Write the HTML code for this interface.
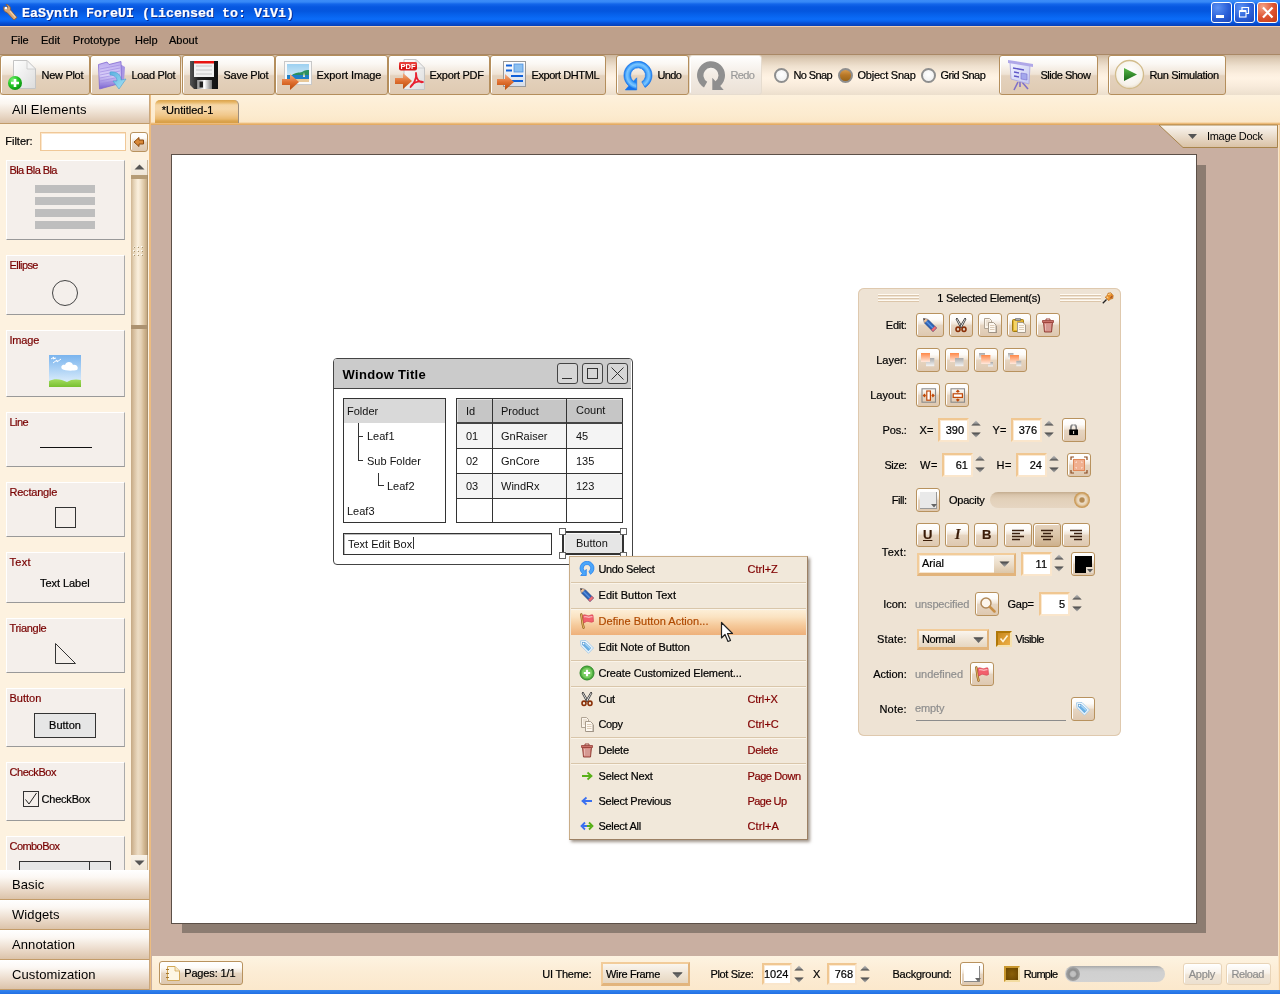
<!DOCTYPE html>
<html lang="en">
<head>
<meta charset="utf-8">
<title>EaSynth ForeUI</title>
<style>
*{box-sizing:border-box;margin:0;padding:0}
html,body{width:1280px;height:994px;overflow:hidden;background:#c9afa1}
body{position:relative;will-change:transform;-webkit-text-stroke:.2px;font:11px "Liberation Sans",sans-serif;color:#000}
.abs{position:absolute}
#titlebar{left:0;top:0;width:1280px;height:26px;background:linear-gradient(#3c8cf8 0,#3688f6 2px,#1466ea 4px,#0657e0 7px,#0456de 11px,#0762ec 15px,#0b6cf8 19px,#0a64f0 21px,#0750d6 23px,#0644c2 25px,#0540b8 26px)}
#titletext{left:22px;top:6px;font:bold 13.33px "Liberation Mono",monospace;color:#fff;white-space:pre;text-shadow:1px 1px 0 #0a2a90}
.wbtn{top:2px;width:21px;height:21px;border:1px solid #fff;border-radius:3px;background:radial-gradient(circle at 30% 25%,#5c92f4,#2a5fd8 55%,#1c46b8)}
#menubar{left:0;top:27px;width:1280px;height:28px;background:#bea08b;border-bottom:1px solid #a98866}
#menubar span{position:absolute;top:7px;font-size:11px}
#toolbar{left:0;top:55px;width:1280px;height:40px;background:linear-gradient(#cdb79e 0,#dccab4 10%,#efe1cf 28%,#fcefdf 48%,#fff3e4 58%,#f8ebdb 78%,#ecdfcd 100%)}
.tb{top:55px;height:40px;border:1px solid #b48e5c;border-radius:3px;box-shadow:inset 1px 1px 0 #fff;background:linear-gradient(#ffffff 0,#fbf8f4 20%,#efe3d5 48%,#e4d2bd 52%,#dfcab2 100%)}
.tb b{position:absolute;top:13px;font-weight:normal;white-space:nowrap}
.tb.dis{border-color:#e6dccf;background:linear-gradient(#fff,#f3ece4 50%,#ebe1d6)}
.tb.dis b{color:#9a9a9a}
.rad{width:15px;height:15px;border-radius:50%;border:2px solid #8e8e8e;background:radial-gradient(circle at 50% 40%,#fff,#ececec)}
.rad.on{background:linear-gradient(#d89a4c,#b87828 45%,#9a6418)}
.rtx{white-space:nowrap}
#tab{left:155px;top:100px;width:84px;height:23px;border-radius:5px 5px 0 0;border-right:1px solid #9c8e80;background:linear-gradient(#d9a24c 0,#e6b462 2px,#f5d6a6 5px,#f6d8aa 9px,#f1c88c 15px,#eab86c 19px,#dba44e 21px,#d79e46 23px)}
#tab span{position:absolute;left:6.8px;top:4px;white-space:nowrap}
.sbtn{border:1px solid #b8925e;border-radius:3px;box-shadow:inset 1px 1px 0 #fff;background:linear-gradient(#fff 0,#fdfbf8 25%,#f1e6d9 45%,#e6d5c1 52%,#dec8b0 100%)}
#sbar{left:131px;top:175px;width:17px;height:680px;border-right:1px solid #a8906c;background:linear-gradient(90deg,#c4a884 0,#d8c0a0 3px,#ecdcc4 7px,#e6d2b6 10px,#d2b892 13px,#bea07a 16px)}
#sthumb{left:131px;top:175px;width:16px;height:154px;background:linear-gradient(90deg,#cfb592 0,#e6d4b8 3px,#fbf0de 7px,#f4e6d0 9px,#dcc6a4 13px,#c4a882 16px);border-top:4px solid #b59c76;border-bottom:4px solid #ac9270}
.sbtn.dis{border-color:#e8d4b8;background:linear-gradient(#fff,#f8f2ea 45%,#f0e6d8 55%,#ece0d0);color:#8e8e8e}
.combo{border:2px solid #f2cc9a;border-right-color:#e2b47c;border-bottom:3px solid #e2b47c;background:linear-gradient(#faf5ee,#f0e5d6 50%,#e6d6c0)}
.inp{background:#fff;border:2px solid #f0c792;border-right-color:#fae6cc;border-bottom-color:#fae6cc;box-shadow:inset 1px 1px 0 #fbe9d2;text-align:right;padding:3px 2px 0 0;white-space:nowrap}
#wfwin{-webkit-text-stroke:0;left:333px;top:358px;width:300px;height:207px;border:1.5px solid #444;border-radius:4px;background:#fff}
.wfb{top:4px;width:21px;height:21px;border:1px solid #444;border-radius:3px;background:#d6d6d6}
.wt{-webkit-text-stroke:0;font-size:11px;white-space:nowrap;color:#111}
.hnd{width:7px;height:7px;background:#fff;border:1px solid #666}
#cmenu{left:569px;top:556px;width:239px;height:284px;background:#f1e8da;border:1px solid #c9ad88;border-right-color:#9c8064;border-bottom-color:#9c8064;box-shadow:2px 2px 3px rgba(80,60,40,.55)}
.sep{left:1px;width:235px;height:2px;background:linear-gradient(#d9c6aa 50%,#faf4ea 50%)}
.mi{white-space:nowrap}
.mi.hl{color:#b04a00}
.mk{white-space:nowrap;color:#800000}
#props{left:858px;top:288px;width:263px;height:448px;background:#eee3d4;box-shadow:inset 0 0 0 1px #dfc9ae;border-radius:6px}
.pl{white-space:nowrap}
.gray{color:#8e8e8e}
.grip{width:41px;height:1px;background:#fffaf2;box-shadow:0 1px 0 #dcc6aa,0 3px 0 #fffaf2,0 4px 0 #dcc6aa,0 6px 0 #fffaf2,0 7px 0 #dcc6aa}
.tbi{font-size:13px;color:#3a1c08}
.sbtn.pressed{background:linear-gradient(#e6d4be,#dcc6aa 50%,#cdb08c)}
#tabrow{left:150px;top:95px;width:1130px;height:30px;background:linear-gradient(#fdf1dd 0,#fdeed5 10px,#fcebcf 20px,#fbe7c8 27px,#f2c88e 28px,#e6ae66 29px,#e2a860 30px)}
#leftpanel{left:0;top:95px;width:151px;height:895px;background:#fdf2e0;border-right:2px solid #ecbc80}
#lphead{-webkit-text-stroke:0;left:0;top:95px;width:150px;height:29px;background:linear-gradient(#fff 0,#fbf6f0 30%,#efe2d4 60%,#dcc4ac 100%);border-bottom:1px solid #c29b69;border-right:1px solid #caa77c}
.acc{-webkit-text-stroke:0;left:0;width:150px;height:30px;background:linear-gradient(#fff 0,#fcf8f4 25%,#f0e3d6 55%,#dcc3aa 100%);border-bottom:1px solid #c39c6a;border-right:1px solid #caa77c;font-size:13px;letter-spacing:.1px;padding:7px 0 0 12px}
.card{left:6px;width:119px;background:#f4efeb;border-top:1px solid #fff;border-left:1px solid #fff;border-right:1px solid #aaa;border-bottom:1px solid #999}
.card i{position:absolute;left:2.5px;top:3px;font-style:normal;color:#780000;font-size:11px;white-space:nowrap}
#canvas{left:171px;top:154px;width:1026px;height:770px;background:#fff;border:1px solid #5c5048}
#statusbar{left:152px;top:956px;width:1128px;height:34px;background:linear-gradient(#fdf3e1,#fcecd4 50%,#fbe8cc)}
#bottomblue{left:0;top:990px;width:1280px;height:4px;background:linear-gradient(#3484ee,#2270e4)}
</style>
</head>
<body>
<svg width="0" height="0" style="position:absolute"><defs><linearGradient id="spu" x1="0" y1="0" x2="0" y2="1"><stop offset="0" stop-color="#c4c4c4"/><stop offset=".6" stop-color="#8a8a8a"/><stop offset="1" stop-color="#3c3c3c"/></linearGradient><linearGradient id="spd" x1="0" y1="0" x2="0" y2="1"><stop offset="0" stop-color="#3c3c3c"/><stop offset=".5" stop-color="#7a7a7a"/><stop offset="1" stop-color="#b0b0b0"/></linearGradient></defs></svg>
<!-- canvas area -->
<div class="abs" style="left:152px;top:125px;width:1126px;height:831px;background:#c9afa1"></div>
<div class="abs" style="left:182px;top:165px;width:1024px;height:768px;background:#8c7c71"></div>
<div class="abs" id="canvas"></div>

<!-- wireframe window -->
<div class="abs" id="wfwin">
<div class="abs" style="left:0;top:0;width:297px;height:30px;background:#cbcbcb;border-bottom:1px solid #444;border-radius:2px 2px 0 0"></div>
<span class="abs" style="left:8.5px;top:7.5px;font:bold 13px 'Liberation Sans',sans-serif;white-space:nowrap;letter-spacing:0.31px">Window Title</span>
<div class="abs wfb" style="left:223px"><div class="abs" style="left:4px;top:14px;width:10px;height:1px;background:#333"></div></div>
<div class="abs wfb" style="left:248px"><div class="abs" style="left:4px;top:4px;width:11px;height:11px;border:1px solid #333"></div></div>
<div class="abs wfb" style="left:273px"><svg class="abs" style="left:3px;top:3px" width="13" height="13" viewBox="0 0 13 13"><path d="M0.5 0.5L12.5 12.5M12.5 0.5L0.5 12.5" stroke="#333" stroke-width="1"/></svg></div>
<!-- tree -->
<div class="abs" style="left:9px;top:39px;width:103px;height:125px;border:1px solid #333;background:#fff"></div>
<div class="abs" style="left:10px;top:40px;width:101px;height:24px;background:#d9d9d9"></div>
<span class="abs wt" style="left:13px;top:46px">Folder</span>
<span class="abs wt" style="left:33px;top:71px">Leaf1</span>
<span class="abs wt" style="left:33px;top:96px">Sub Folder</span>
<span class="abs wt" style="left:53px;top:121px">Leaf2</span>
<span class="abs wt" style="left:13px;top:146px">Leaf3</span>
<div class="abs" style="left:24px;top:64px;width:1px;height:38px;background:#333"></div>
<div class="abs" style="left:24px;top:77px;width:5px;height:1px;background:#333"></div>
<div class="abs" style="left:24px;top:101px;width:5px;height:1px;background:#333"></div>
<div class="abs" style="left:44px;top:114px;width:1px;height:13px;background:#333"></div>
<div class="abs" style="left:44px;top:126px;width:6px;height:1px;background:#333"></div>
<!-- table -->
<div class="abs" style="left:122px;top:39px;width:167px;height:125px;border:1px solid #333;background:#fff"></div>
<div class="abs" style="left:123px;top:40px;width:165px;height:24px;background:#c6c6c6;box-shadow:inset 1px 1px 0 #e4e4e4"></div>
<div class="abs" style="left:123px;top:65px;width:165px;height:24px;background:#f4f4f4"></div>
<div class="abs" style="left:123px;top:115px;width:165px;height:24px;background:#f4f4f4"></div>
<div class="abs" style="left:122px;top:63px;width:167px;height:2px;background:#444"></div>
<div class="abs" style="left:122px;top:89px;width:167px;height:1px;background:#333"></div>
<div class="abs" style="left:122px;top:114px;width:167px;height:1px;background:#333"></div>
<div class="abs" style="left:122px;top:139px;width:167px;height:1px;background:#333"></div>
<div class="abs" style="left:158px;top:39px;width:1px;height:125px;background:#333"></div>
<div class="abs" style="left:232px;top:39px;width:1px;height:125px;background:#333"></div>
<span class="abs wt" style="left:132px;top:46px">Id</span><span class="abs wt" style="left:167px;top:46px">Product</span><span class="abs wt" style="left:242px;top:45px">Count</span>
<span class="abs wt" style="left:132px;top:71px">01</span><span class="abs wt" style="left:167px;top:71px">GnRaiser</span><span class="abs wt" style="left:242px;top:71px">45</span>
<span class="abs wt" style="left:132px;top:96px">02</span><span class="abs wt" style="left:167px;top:96px">GnCore</span><span class="abs wt" style="left:242px;top:96px">135</span>
<span class="abs wt" style="left:132px;top:121px">03</span><span class="abs wt" style="left:167px;top:121px">WindRx</span><span class="abs wt" style="left:242px;top:121px">123</span>
<!-- text edit + button -->
<div class="abs" style="left:9px;top:174px;width:209px;height:22px;border:1.5px solid #333;background:#fff;box-shadow:inset 1px 1px 0 #bbb"></div>
<span class="abs wt" style="left:14px;top:179px">Text Edit Box</span><div class="abs" style="left:79px;top:178px;width:1px;height:12px;background:#333"></div>
<div class="abs" style="left:228px;top:172px;width:62px;height:24px;border:2px solid #333;background:#e6e6e6;box-shadow:inset 1px 1px 0 #fafafa"></div>
<span class="abs wt" style="left:242px;top:178px">Button</span>
<div class="abs hnd" style="left:225px;top:169px"></div><div class="abs hnd" style="left:286px;top:169px"></div><div class="abs hnd" style="left:225px;top:193px"></div><div class="abs hnd" style="left:286px;top:193px"></div>
</div>

<!-- properties panel -->
<div class="abs" id="props">
<div class="abs grip" style="left:20px;top:6px"></div><div class="abs grip" style="left:202px;top:6px"></div>
<span class="abs" style="left:79.3px;top:4px;white-space:nowrap;letter-spacing:-0.24px">1 Selected Element(s)</span>
<svg class="abs" style="left:244px;top:4px" width="12" height="12" viewBox="0 0 12 12"><path d="M0.8 11.2L4.5 7.5" stroke="#222" stroke-width="1.3"/><path d="M3.2 5.2L6.8 8.8L8.2 7.2L10.8 6.5L11.2 3.5L8.8 0.8L6 1.2L5 3.8Z" fill="#e8902c" stroke="#b06010" stroke-width=".6"/><path d="M6.2 2.5L8.5 1.8M5 4.8L6 5.8" stroke="#fcd490" stroke-width="1.1" stroke-linecap="round"/><path d="M8.5 6.2L10.2 4" stroke="#a04c28" stroke-width="1.2"/></svg>
<span class="abs pl" style="right:214.3px;top:31px;letter-spacing:-0.23px">Edit:</span>
<div class="abs sbtn" style="left:58px;top:25px;width:28px;height:24px"><svg class="abs" style="left:5px;top:3px" width="16" height="16" viewBox="0 0 16 16"><path d="M1.5 1.5L6 2.5L14.5 11L11 14.5L2.5 6Z" fill="#2e64b8" stroke="#1a3c7c" stroke-width=".7" stroke-linejoin="round"/><path d="M4.2 4.2L12.7 12.7" stroke="#5a94e0" stroke-width="1.3"/><path d="M1.5 1.5L6 2.5L2.5 6Z" fill="#f4c8a0" stroke="#c89868" stroke-width=".4"/><path d="M1.5 1.5L3.3 1.9L1.9 3.3Z" fill="#222"/><path d="M12.8 9.3L14.5 11L11 14.5L9.3 12.8Z" fill="#f07078" stroke="#c04850" stroke-width=".5"/></svg></div>
<div class="abs sbtn" style="left:91px;top:25px;width:24px;height:24px"><svg class="abs" style="left:3px;top:3px" width="16" height="16" viewBox="0 0 16 16"><path d="M4 1L9 9.5L7.5 10.5L3 2Z" fill="#f4f4f4" stroke="#222" stroke-width=".8"/><path d="M12 1L7 9.5L8.5 10.5L13 2Z" fill="#f4f4f4" stroke="#222" stroke-width=".8"/><ellipse cx="5" cy="12.3" rx="2" ry="2.2" fill="none" stroke="#8a3008" stroke-width="1.6"/><ellipse cx="11" cy="12.3" rx="2" ry="2.2" fill="none" stroke="#8a3008" stroke-width="1.6"/></svg></div>
<div class="abs sbtn" style="left:120px;top:25px;width:24px;height:24px"><svg class="abs" style="left:3px;top:3px" width="16" height="16" viewBox="0 0 16 16"><path d="M2.5 1.5H7.5L9.5 3.5V11.5H2.5Z" fill="#fbf4ea" stroke="#b0a494" stroke-width="1"/><path d="M4 4H8M4 6H8M4 8H8" stroke="#d8c8b4" stroke-width=".8"/><path d="M6.5 5.5H11.5L14 8V15.5H6.5Z" fill="#fdf8f0" stroke="#a89c8c" stroke-width="1"/><path d="M8 8.5H12.5M8 10.5H12.5M8 12.5H12.5" stroke="#d4c0a8" stroke-width=".8"/><path d="M7.5 16H14.5V9" stroke="#8a8074" stroke-width="1" fill="none" opacity=".6"/></svg></div>
<div class="abs sbtn" style="left:149px;top:25px;width:24px;height:24px"><svg class="abs" style="left:3px;top:3px" width="16" height="16" viewBox="0 0 16 16"><rect x="1.5" y="2.5" width="11" height="12" rx="1" fill="#e0b030" stroke="#a07c10" stroke-width="1"/><rect x="3" y="4" width="3" height="9" fill="#f4d468"/><path d="M4.5 1.5H9.5V3.5H4.5Z" fill="#aaa" stroke="#666" stroke-width=".6"/><path d="M6.5 5.5H12L14.5 8V15.5H6.5Z" fill="#fdf8f0" stroke="#a89c8c" stroke-width="1"/><path d="M8 8.5H13M8 10.5H13M8 12.5H13" stroke="#d4c0a8" stroke-width=".8"/></svg></div>
<div class="abs sbtn" style="left:178px;top:25px;width:24px;height:24px"><svg class="abs" style="left:3px;top:3px" width="16" height="16" viewBox="0 0 16 16"><path d="M3.5 5.5H12.5L11.5 15H4.5Z" fill="#d88c84" stroke="#8a3830" stroke-width=".9"/><path d="M2.5 3.5H13.5V5.5H2.5Z" fill="#c87068" stroke="#984038" stroke-width=".8"/><path d="M6 3.5V2H10V3.5" fill="none" stroke="#984038" stroke-width="1"/><path d="M6 7V13.5M8 7V13.5M10 7V13.5" stroke="#fbe4e0" stroke-width="1"/><path d="M7 7V13.5M9 7V13.5M11 7V13.5" stroke="#a85048" stroke-width=".6"/></svg></div>
<span class="abs pl" style="right:214.3px;top:66px;letter-spacing:-0.02px">Layer:</span>
<div class="abs sbtn" style="left:58px;top:60px;width:24px;height:24px"><svg class="abs" style="left:0px;top:0px" width="22" height="22" viewBox="0 0 22 22"><defs><linearGradient id="lo" x1="0" y1="0" x2="0" y2="1"><stop offset="0" stop-color="#ff8848"/><stop offset="1" stop-color="#ffe9de"/></linearGradient><linearGradient id="lg" x1="0" y1="0" x2="0" y2="1"><stop offset="0" stop-color="#a8a8a8"/><stop offset="1" stop-color="#f6f6f6"/></linearGradient></defs><rect x="9" y="9" width="8.3" height="8.2" fill="url(#lg)"/><rect x="4" y="4" width="9" height="9" fill="url(#lo)"/></svg></div>
<div class="abs sbtn" style="left:87px;top:60px;width:24px;height:24px"><svg class="abs" style="left:0px;top:0px" width="22" height="22" viewBox="0 0 22 22"><rect x="4" y="4" width="9" height="9" fill="url(#lo)"/><rect x="9" y="9" width="8.5" height="8.2" fill="url(#lg)"/></svg></div>
<div class="abs sbtn" style="left:116px;top:60px;width:24px;height:24px"><svg class="abs" style="left:0px;top:0px" width="22" height="22" viewBox="0 0 22 22"><rect x="4" y="4" width="6" height="6" fill="url(#lg)"/><rect x="13" y="13" width="5" height="4.5" fill="url(#lg)"/><rect x="6.2" y="6" width="9.2" height="9" fill="url(#lo)"/></svg></div>
<div class="abs sbtn" style="left:145px;top:60px;width:24px;height:24px"><svg class="abs" style="left:0px;top:0px" width="22" height="22" viewBox="0 0 22 22"><rect x="4" y="4" width="5.5" height="5.5" fill="url(#lg)"/><rect x="6" y="6" width="9" height="9" fill="url(#lo)"/><rect x="12.3" y="11.8" width="5" height="5.4" fill="url(#lg)"/></svg></div>
<span class="abs pl" style="right:214.3px;top:101px;letter-spacing:0.07px">Layout:</span>
<div class="abs sbtn" style="left:58px;top:95px;width:24px;height:24px"><svg class="abs" style="left:0px;top:0px" width="22" height="22" viewBox="0 0 22 22"><rect x="5" y="4.8" width="13.5" height="13.4" fill="none" stroke="#8a8a8a" stroke-width="1.1"/><rect x="9.8" y="7" width="3.6" height="9.2" fill="#fff" stroke="#c04808" stroke-width="1.2"/><path d="M5.6 11.6L7.6 9.6L9 11.6L7.6 13.6Z M17.8 11.6L15.8 9.6L14.4 11.6L15.8 13.6Z" fill="#c04808"/></svg></div>
<div class="abs sbtn" style="left:87px;top:95px;width:24px;height:24px"><svg class="abs" style="left:0px;top:0px" width="22" height="22" viewBox="0 0 22 22"><rect x="5" y="4.8" width="13.5" height="13.4" fill="none" stroke="#8a8a8a" stroke-width="1.1"/><rect x="7.2" y="9.8" width="9.2" height="3.6" fill="#fff" stroke="#c04808" stroke-width="1.2"/><path d="M11.8 5.4L13.8 7.4L11.8 8.8L9.8 7.4Z M11.8 17.8L13.8 15.8L11.8 14.4L9.8 15.8Z" fill="#c04808"/></svg></div>
<span class="abs pl" style="right:214.3px;top:136px;letter-spacing:-0.19px">Pos.:</span>
<span class="abs" style="left:61.5px;top:136px;white-space:nowrap;letter-spacing:0.23px">X=</span>
<div class="abs inp" style="left:80px;top:130px;width:31px;height:24px;padding-top:4px;padding-right:3px">390</div>
<svg class="abs" style="left:113px;top:132px" width="10" height="18" viewBox="0 0 10 18"><path d="M0.3 5.6L5 0.5L9.7 5.6Z" fill="url(#spu)"/><path d="M0.3 12.4L5 17.5L9.7 12.4Z" fill="url(#spd)"/></svg>
<span class="abs" style="left:134.5px;top:136px;white-space:nowrap;letter-spacing:0.23px">Y=</span>
<div class="abs inp" style="left:153px;top:130px;width:31px;height:24px;padding-top:4px;padding-right:3px">376</div>
<svg class="abs" style="left:186px;top:132px" width="10" height="18" viewBox="0 0 10 18"><path d="M0.3 5.6L5 0.5L9.7 5.6Z" fill="url(#spu)"/><path d="M0.3 12.4L5 17.5L9.7 12.4Z" fill="url(#spd)"/></svg>
<div class="abs sbtn" style="left:204px;top:130px;width:24px;height:24px"><svg class="abs" style="left:3px;top:3px" width="15" height="16" viewBox="0 0 15 16"><defs><linearGradient id="shk" x1="0" y1="0" x2="1" y2="0"><stop offset="0" stop-color="#777"/><stop offset=".5" stop-color="#ccc"/><stop offset="1" stop-color="#777"/></linearGradient></defs><path d="M5 8V5.5A2.6 2.6 0 0 1 10.2 5.5V8" fill="none" stroke="url(#shk)" stroke-width="1.7"/><rect x="3.2" y="7.5" width="8.8" height="5.6" fill="#000"/><rect x="7.1" y="9" width="1" height="3" fill="#e8dccc"/></svg></div>
<span class="abs pl" style="right:214.3px;top:171px;letter-spacing:-0.44px">Size:</span>
<span class="abs" style="left:62px;top:171px;white-space:nowrap;letter-spacing:0.69px">W=</span>
<div class="abs inp" style="left:84px;top:165px;width:31px;height:24px;padding-top:4px;padding-right:3px">61</div>
<svg class="abs" style="left:117px;top:167px" width="10" height="18" viewBox="0 0 10 18"><path d="M0.3 5.6L5 0.5L9.7 5.6Z" fill="url(#spu)"/><path d="M0.3 12.4L5 17.5L9.7 12.4Z" fill="url(#spd)"/></svg>
<span class="abs" style="left:138.5px;top:171px;white-space:nowrap;letter-spacing:0.62px">H=</span>
<div class="abs inp" style="left:158px;top:165px;width:31px;height:24px;padding-top:4px;padding-right:3px">24</div>
<svg class="abs" style="left:191px;top:167px" width="10" height="18" viewBox="0 0 10 18"><path d="M0.3 5.6L5 0.5L9.7 5.6Z" fill="url(#spu)"/><path d="M0.3 12.4L5 17.5L9.7 12.4Z" fill="url(#spd)"/></svg>
<div class="abs sbtn" style="left:209px;top:165px;width:24px;height:24px"><svg class="abs" style="left:2px;top:2px" width="18" height="18" viewBox="0 0 18 18"><rect x="3.5" y="3.5" width="11" height="11" fill="#f0b090" stroke="#e08858" stroke-width="1"/><path d="M6 7V6H7M11 6H12V7M12 11V12H11M7 12H6V11" stroke="#fde0d0" stroke-width="1" fill="none"/><path d="M1 4V1H4M14 1H17V4M17 14V17H14M4 17H1V14" stroke="#8a4a20" stroke-width="1.2" fill="none"/></svg></div>
<span class="abs pl" style="right:214.3px;top:206px;letter-spacing:-0.43px">Fill:</span>
<div class="abs sbtn" style="left:58px;top:200px;width:24px;height:24px"><div class="abs" style="left:3px;top:3px;width:17px;height:17px;background:#e9e9e9;border-right:1px solid #999;border-bottom:1px solid #999"></div><svg class="abs" style="left:14px;top:15px" width="6" height="4" viewBox="0 0 6 4"><path d="M0 0H6L3 3.5Z" fill="#666"/></svg></div>
<span class="abs" style="left:91px;top:205.5px;white-space:nowrap;letter-spacing:-0.25px">Opacity</span>
<div class="abs" style="left:132px;top:204px;width:100px;height:16px;border-radius:8px;background:linear-gradient(#c4ad90 0,#d9c5ac 3px,#e2d0b9 7px,#e6d6c2 100%)"></div>
<div class="abs" style="left:216px;top:204px;width:16px;height:16px;border-radius:50%;background:radial-gradient(circle at 50% 50%,#b48a52 0,#b48a52 18%,#ecdcc6 30%,#e6d0b0 45%,#cc9e5e 62%,#c08c48 100%)"></div>
<span class="abs pl" style="right:214.3px;top:258px;letter-spacing:0.32px">Text:</span>
<div class="abs sbtn" style="left:58px;top:235px;width:24px;height:24px"><span class="abs tbi" style="left:6px;top:3px;text-decoration:underline;font-weight:bold">U</span></div>
<div class="abs sbtn" style="left:87px;top:235px;width:24px;height:24px"><span class="abs tbi" style="left:9px;top:3px;font-style:italic;font-weight:bold;font-family:'Liberation Serif',serif;font-size:14px">I</span></div>
<div class="abs sbtn" style="left:116px;top:235px;width:24px;height:24px"><span class="abs tbi" style="left:7px;top:3px;font-weight:bold">B</span></div>
<div class="abs sbtn" style="left:146px;top:235px;width:28px;height:24px"><svg class="abs" style="left:4px;top:2px" width="18" height="18" viewBox="0 0 18 18"><path d="M3 4.5H15 M3 7.5H11 M3 10.5H15 M3 13.5H11" stroke="#3a2010" stroke-width="1.3"/></svg></div>
<div class="abs sbtn pressed" style="left:175px;top:235px;width:28px;height:24px"><svg class="abs" style="left:4px;top:2px" width="18" height="18" viewBox="0 0 18 18"><path d="M3 4.5H15 M5 7.5H13 M3 10.5H15 M5 13.5H13" stroke="#3a2010" stroke-width="1.3"/></svg></div>
<div class="abs sbtn" style="left:204px;top:235px;width:28px;height:24px"><svg class="abs" style="left:4px;top:2px" width="18" height="18" viewBox="0 0 18 18"><path d="M3 4.5H15 M7 7.5H15 M3 10.5H15 M7 13.5H15" stroke="#3a2010" stroke-width="1.3"/></svg></div>
<div class="abs combo" style="left:59px;top:265px;width:99px;height:23px;background:#f6e6d0"><div class="abs" style="left:1px;top:1px;width:74px;height:16px;background:#fff"></div><div class="abs" style="left:75px;top:0;width:20px;height:18px;background:linear-gradient(#f6efe4,#eadbc6 55%,#dcc6a8)"></div><span class="abs" style="left:3px;top:2px;white-space:nowrap;letter-spacing:-0.00px">Arial</span><svg class="abs" style="left:80px;top:6px" width="11" height="7" viewBox="0 0 11 7"><path d="M0.5 0.5H10.5L5.5 6Z" fill="url(#spd)"/></svg></div>
<div class="abs inp" style="left:163px;top:264px;width:31px;height:24px;padding-top:4px;padding-right:3px">11</div>
<svg class="abs" style="left:196px;top:266px" width="10" height="18" viewBox="0 0 10 18"><path d="M0.3 5.6L5 0.5L9.7 5.6Z" fill="url(#spu)"/><path d="M0.3 12.4L5 17.5L9.7 12.4Z" fill="url(#spd)"/></svg>
<div class="abs sbtn" style="left:213px;top:264px;width:24px;height:24px"><div class="abs" style="left:3px;top:3px;width:17px;height:17px;background:#000"></div><div class="abs" style="left:14px;top:14px;width:7px;height:6px;background:#e8dccc"></div><svg class="abs" style="left:15px;top:16px" width="6" height="4" viewBox="0 0 6 4"><path d="M0 0H6L3 3.5Z" fill="#555"/></svg></div>
<span class="abs pl" style="right:214.3px;top:310px;letter-spacing:-0.09px">Icon:</span>
<span class="abs gray" style="left:57px;top:310px;white-space:nowrap;letter-spacing:-0.12px">unspecified</span>
<div class="abs sbtn" style="left:117px;top:304px;width:24px;height:24px"><svg class="abs" style="left:3px;top:3px" width="17" height="17" viewBox="0 0 17 17"><circle cx="7" cy="7" r="5" fill="#fdf6ec" stroke="#b08858" stroke-width="1.5"/><path d="M11 11L15.5 15.5" stroke="#c89048" stroke-width="2.5" stroke-linecap="round"/></svg></div>
<span class="abs" style="left:149.5px;top:310px;white-space:nowrap;letter-spacing:-0.24px">Gap=</span>
<div class="abs inp" style="left:181px;top:304px;width:31px;height:24px;padding-top:4px;padding-right:3px">5</div>
<svg class="abs" style="left:214px;top:306px" width="10" height="18" viewBox="0 0 10 18"><path d="M0.3 5.6L5 0.5L9.7 5.6Z" fill="url(#spu)"/><path d="M0.3 12.4L5 17.5L9.7 12.4Z" fill="url(#spd)"/></svg>
<span class="abs pl" style="right:214.3px;top:345px;letter-spacing:0.15px">State:</span>
<div class="abs combo" style="left:59px;top:341px;width:72px;height:21px"><span class="abs" style="left:3px;top:2px;white-space:nowrap;letter-spacing:-0.39px">Normal</span><svg class="abs" style="left:54px;top:6px" width="11" height="7" viewBox="0 0 11 7"><path d="M0.5 0.5H10.5L5.5 6Z" fill="#666"/><path d="M0.5 0.5H10.5L9.5 1.5H1.5Z" fill="#444"/></svg></div>
<div class="abs" style="left:138px;top:343px;width:16px;height:16px;border:2px solid #b07808;border-right-color:#f6e2b0;border-bottom-color:#f6e2b0;background:linear-gradient(135deg,#c8881c,#eeb048)"><svg class="abs" style="left:1px;top:1px" width="10" height="10" viewBox="0 0 10 10"><path d="M1.5 4.5L4 7.5L8.5 1.5" fill="none" stroke="#fff4d8" stroke-width="1.6"/></svg></div>
<span class="abs" style="left:157.5px;top:345px;white-space:nowrap;letter-spacing:-0.54px">Visible</span>
<span class="abs pl" style="right:214.3px;top:380px;letter-spacing:-0.02px">Action:</span>
<span class="abs gray" style="left:57px;top:380px;white-space:nowrap;letter-spacing:-0.04px">undefined</span>
<div class="abs sbtn" style="left:112px;top:374px;width:24px;height:24px"><svg class="abs" style="left:3px;top:3px" width="16" height="16" viewBox="0 0 16 16"><path d="M2.3 1.5C3 5 3.2 10 4.5 14.5" stroke="#8a5a18" stroke-width="2.4" stroke-linecap="round" fill="none"/><path d="M2.3 1.5C3 5 3.2 10 4.5 14.5" stroke="#e0b060" stroke-width="1.2" stroke-linecap="round" fill="none"/><path d="M3.8 2.5C6 0.5 8 3.5 10.5 2.5C12 2 13 1.5 14 2.2L14.5 8.5C12 10.5 9.5 7.5 7.5 8.5C6.2 9.2 5.5 9.5 4.8 10Z" fill="#f2606c" stroke="#d03848" stroke-width=".6"/><path d="M5 4C7 2.5 8.5 5 10.5 4.2C11.5 3.8 12.5 3.5 13.5 3.8" stroke="#fab4b8" stroke-width="1.3" fill="none"/></svg></div>
<span class="abs pl" style="right:214.3px;top:415px;letter-spacing:0.18px">Note:</span>
<span class="abs gray" style="left:57px;top:414px;white-space:nowrap;letter-spacing:-0.12px">empty</span>
<div class="abs" style="left:58px;top:432px;width:150px;height:1px;background:#8c8c8c"></div>
<div class="abs sbtn" style="left:213px;top:409px;width:24px;height:24px"><svg class="abs" style="left:3px;top:3px" width="16" height="16" viewBox="0 0 16 16"><path d="M1.5 1.8L7 1.5L14.5 9L9.5 14.2L2 6.8Z" fill="#f4fafe" stroke="#a8cce8" stroke-width="1" stroke-linejoin="round"/><path d="M3.5 3.6L6.6 3.4L12.5 9L9.4 12.2L3.8 6.5Z" fill="#6cb0e4"/><path d="M6 4.5L11.5 9.5" stroke="#a8d4f4" stroke-width="1.5"/><rect x="3.6" y="3.6" width="2.2" height="2.2" fill="#fff" stroke="#5a9cd4" stroke-width=".6"/></svg></div>
</div>

<!-- context menu -->
<div class="abs" id="cmenu">
<div class="abs" style="left:1px;top:52px;width:235px;height:26px;background:linear-gradient(#fdf0da 0,#fbe3c2 30%,#f5c898 65%,#eeb07a 100%)"></div>
<div class="abs sep" style="top:25px"></div><div class="abs sep" style="top:51px"></div><div class="abs sep" style="top:103px"></div><div class="abs sep" style="top:129px"></div><div class="abs sep" style="top:180px"></div><div class="abs sep" style="top:206px"></div>
<svg class="abs" style="left:9px;top:4px" width="16" height="16" viewBox="0 0 16 16"><path d="M11.5 13.3A7 7 0 1 0 3.4 12.5L1.7 14.5L7.3 14.5L7.3 8.4L5.8 10.2A3.7 3.7 0 1 1 9.9 10.4Z" fill="#4aa6fa" stroke="#1a78ec" stroke-width=".7" stroke-linejoin="round"/></svg><span class="abs mi" style="left:28.5px;top:6px;letter-spacing:-0.37px">Undo Select</span><span class="abs mk" style="left:177.5px;top:6px;letter-spacing:0.01px">Ctrl+Z</span>
<svg class="abs" style="left:9px;top:30px" width="16" height="16" viewBox="0 0 16 16"><path d="M1.5 1.5L6 2.5L14.5 11L11 14.5L2.5 6Z" fill="#2e64b8" stroke="#1a3c7c" stroke-width=".7" stroke-linejoin="round"/><path d="M4.2 4.2L12.7 12.7" stroke="#5a94e0" stroke-width="1.3"/><path d="M1.5 1.5L6 2.5L2.5 6Z" fill="#f4c8a0" stroke="#c89868" stroke-width=".4"/><path d="M1.5 1.5L3.3 1.9L1.9 3.3Z" fill="#222"/><path d="M12.8 9.3L14.5 11L11 14.5L9.3 12.8Z" fill="#f07078" stroke="#c04850" stroke-width=".5"/></svg><span class="abs mi" style="left:28.5px;top:32px;letter-spacing:0.04px">Edit Button Text</span>
<svg class="abs" style="left:9px;top:56px" width="16" height="16" viewBox="0 0 16 16"><path d="M2.3 1.5C3 5 3.2 10 4.5 14.5" stroke="#8a5a18" stroke-width="2.4" stroke-linecap="round" fill="none"/><path d="M2.3 1.5C3 5 3.2 10 4.5 14.5" stroke="#e0b060" stroke-width="1.2" stroke-linecap="round" fill="none"/><path d="M3.8 2.5C6 0.5 8 3.5 10.5 2.5C12 2 13 1.5 14 2.2L14.5 8.5C12 10.5 9.5 7.5 7.5 8.5C6.2 9.2 5.5 9.5 4.8 10Z" fill="#f2606c" stroke="#d03848" stroke-width=".6"/><path d="M5 4C7 2.5 8.5 5 10.5 4.2C11.5 3.8 12.5 3.5 13.5 3.8" stroke="#fab4b8" stroke-width="1.3" fill="none"/></svg><span class="abs mi hl" style="left:28.5px;top:58px;letter-spacing:0.05px">Define Button Action...</span>
<svg class="abs" style="left:9px;top:82px" width="16" height="16" viewBox="0 0 16 16"><path d="M1.5 1.8L7 1.5L14.5 9L9.5 14.2L2 6.8Z" fill="#f4fafe" stroke="#a8cce8" stroke-width="1" stroke-linejoin="round"/><path d="M3.5 3.6L6.6 3.4L12.5 9L9.4 12.2L3.8 6.5Z" fill="#6cb0e4"/><path d="M6 4.5L11.5 9.5" stroke="#a8d4f4" stroke-width="1.5"/><rect x="3.6" y="3.6" width="2.2" height="2.2" fill="#fff" stroke="#5a9cd4" stroke-width=".6"/></svg><span class="abs mi" style="left:28.5px;top:84px;letter-spacing:-0.05px">Edit Note of Button</span>
<svg class="abs" style="left:9px;top:108px" width="16" height="16" viewBox="0 0 16 16"><circle cx="8" cy="8" r="7" fill="#52b040" stroke="#2f8a2a" stroke-width="1"/><circle cx="8" cy="8" r="5.2" fill="#78cc60"/><path d="M4.8 8H11.2M8 4.8V11.2" stroke="#fff" stroke-width="2.2"/></svg><span class="abs mi" style="left:28.5px;top:110px;letter-spacing:-0.13px">Create Customized Element...</span>
<svg class="abs" style="left:9px;top:134px" width="16" height="16" viewBox="0 0 16 16"><path d="M4 1L9 9.5L7.5 10.5L3 2Z" fill="#f4f4f4" stroke="#222" stroke-width=".8"/><path d="M12 1L7 9.5L8.5 10.5L13 2Z" fill="#f4f4f4" stroke="#222" stroke-width=".8"/><ellipse cx="5" cy="12.3" rx="2" ry="2.2" fill="none" stroke="#8a3008" stroke-width="1.6"/><ellipse cx="11" cy="12.3" rx="2" ry="2.2" fill="none" stroke="#8a3008" stroke-width="1.6"/></svg><span class="abs mi" style="left:28.5px;top:136px;letter-spacing:-0.26px">Cut</span><span class="abs mk" style="left:177.5px;top:136px;letter-spacing:-0.11px">Ctrl+X</span>
<svg class="abs" style="left:9px;top:159px" width="16" height="16" viewBox="0 0 16 16"><path d="M2.5 1.5H7.5L9.5 3.5V11.5H2.5Z" fill="#fbf4ea" stroke="#b0a494" stroke-width="1"/><path d="M4 4H8M4 6H8M4 8H8" stroke="#d8c8b4" stroke-width=".8"/><path d="M6.5 5.5H11.5L14 8V15.5H6.5Z" fill="#fdf8f0" stroke="#a89c8c" stroke-width="1"/><path d="M8 8.5H12.5M8 10.5H12.5M8 12.5H12.5" stroke="#d4c0a8" stroke-width=".8"/><path d="M7.5 16H14.5V9" stroke="#8a8074" stroke-width="1" fill="none" opacity=".6"/></svg><span class="abs mi" style="left:28.5px;top:161px;letter-spacing:-0.43px">Copy</span><span class="abs mk" style="left:177.5px;top:161px;letter-spacing:-0.04px">Ctrl+C</span>
<svg class="abs" style="left:9px;top:185px" width="16" height="16" viewBox="0 0 16 16"><path d="M3.5 5.5H12.5L11.5 15H4.5Z" fill="#d88c84" stroke="#8a3830" stroke-width=".9"/><path d="M2.5 3.5H13.5V5.5H2.5Z" fill="#c87068" stroke="#984038" stroke-width=".8"/><path d="M6 3.5V2H10V3.5" fill="none" stroke="#984038" stroke-width="1"/><path d="M6 7V13.5M8 7V13.5M10 7V13.5" stroke="#fbe4e0" stroke-width="1"/><path d="M7 7V13.5M9 7V13.5M11 7V13.5" stroke="#a85048" stroke-width=".6"/></svg><span class="abs mi" style="left:28.5px;top:187px;letter-spacing:-0.26px">Delete</span><span class="abs mk" style="left:177.5px;top:187px;letter-spacing:-0.26px">Delete</span>
<svg class="abs" style="left:9px;top:211px" width="16" height="16" viewBox="0 0 16 16"><path d="M3 8H12M8.5 4.5L12.5 8L8.5 11.5" fill="none" stroke="#58b018" stroke-width="1.8"/></svg><span class="abs mi" style="left:28.5px;top:213px;letter-spacing:-0.20px">Select Next</span><span class="abs mk" style="left:177.5px;top:213px;letter-spacing:-0.40px">Page Down</span>
<svg class="abs" style="left:9px;top:236px" width="16" height="16" viewBox="0 0 16 16"><path d="M13 8H4M7.5 4.5L3.5 8L7.5 11.5" fill="none" stroke="#3a70f0" stroke-width="1.8"/></svg><span class="abs mi" style="left:28.5px;top:238px;letter-spacing:-0.26px">Select Previous</span><span class="abs mk" style="left:177.5px;top:238px;letter-spacing:-0.55px">Page Up</span>
<svg class="abs" style="left:9px;top:261px" width="16" height="16" viewBox="0 0 16 16"><path d="M8 8H4M6 4.5L2.5 8L6 11.5" fill="none" stroke="#3a70f0" stroke-width="1.8"/><path d="M8 8H12M10 4.5L13.5 8L10 11.5" fill="none" stroke="#58b018" stroke-width="1.8"/></svg><span class="abs mi" style="left:28.5px;top:263px;letter-spacing:-0.29px">Select All</span><span class="abs mk" style="left:177.5px;top:263px;letter-spacing:0.09px">Ctrl+A</span>
</div>
<svg class="abs" style="left:720px;top:621px" width="14" height="22" viewBox="0 0 14 22"><path d="M1.5 1.5V17L5 13.5L8 20.5L10.5 19.5L7.5 12.5H12.5Z" fill="#fff" stroke="#222" stroke-width="1.2" stroke-linejoin="round"/></svg>

<!-- title bar -->
<div class="abs" id="titlebar"></div>
<div class="abs" style="left:0;top:26px;width:1280px;height:1px;background:#efcdb2"></div>
<svg class="abs" style="left:1px;top:3px" width="18" height="18" viewBox="0 0 18 18"><path d="M3 3.5C2 6 3 9 6 9.5L13 17L16 14.5L9.5 7C10 4 8 1.5 5 1.5L7 4L5.5 6L3 3.5Z" fill="#d8a878" stroke="#8a5a30" stroke-width=".8"/><circle cx="5" cy="5" r="1.3" fill="#fff"/><path d="M9 8L14.5 14.5" stroke="#f0d0a8" stroke-width="1.2"/></svg>
<div class="abs" id="titletext">EaSynth ForeUI (Licensed to: ViVi)</div>
<div class="abs wbtn" style="left:1211px"><div class="abs" style="left:4px;top:12px;width:8px;height:3px;background:#fff"></div></div>
<div class="abs wbtn" style="left:1234px"><svg class="abs" style="left:0;top:0" width="19" height="19" viewBox="0 0 19 19"><path d="M7 7V4.5H13.5V10.5H11" fill="none" stroke="#fff" stroke-width="1.2"/><path d="M4.5 8H11" stroke="#fff" stroke-width="2"/><rect x="4.5" y="8" width="6.5" height="6" fill="none" stroke="#fff" stroke-width="1.1"/></svg></div>
<div class="abs wbtn" style="left:1257px;background:radial-gradient(circle at 25% 20%,#f4a284,#de5432 50%,#c23a14)"><svg class="abs" style="left:0;top:0" width="19" height="19" viewBox="0 0 19 19"><path d="M5 4.5L14.5 14.5M14.5 4.5L5 14.5" stroke="#fff" stroke-width="2.2"/></svg></div>

<!-- menu bar -->
<div class="abs" id="menubar">
<span style="left:11px">File</span><span style="left:41px">Edit</span><span style="left:73px">Prototype</span><span style="left:135px">Help</span><span style="left:169px">About</span>
</div>

<!-- toolbar -->
<div class="abs" id="toolbar"></div>
<div class="abs tb" style="left:0px;width:90px"><b style="left:40.5px;letter-spacing:-0.29px">New Plot</b>
<svg class="abs" style="left:5px;top:2px" width="34" height="34" viewBox="0 0 34 34"><defs><linearGradient id="pg" x1="0" y1="0" x2="1" y2="1"><stop offset="0" stop-color="#fff"/><stop offset="1" stop-color="#dcdcdc"/></linearGradient><radialGradient id="gr" cx=".35" cy=".3" r=".8"><stop offset="0" stop-color="#7df27a"/><stop offset=".5" stop-color="#22c422"/><stop offset="1" stop-color="#0a8a10"/></radialGradient></defs>
<path d="M7.5 2.5H21L29.5 11V30.5H7.5Z" fill="url(#pg)" stroke="#c4c4c4"/><path d="M21 2.5V11H29.5Z" fill="#f4f4f4" stroke="#c8c8c8" stroke-width=".8"/>
<circle cx="9" cy="25" r="7" fill="url(#gr)"/><path d="M5 25H13M9 21V29" stroke="#fff" stroke-width="2.6"/></svg></div>
<div class="abs tb" style="left:90px;width:91px"><b style="left:40.5px;letter-spacing:-0.31px">Load Plot</b>
<svg class="abs" style="left:5px;top:2px" width="34" height="34" viewBox="0 0 34 34"><defs><linearGradient id="fo" x1="0" y1="0" x2="0" y2="1"><stop offset="0" stop-color="#b9a8ee"/><stop offset=".5" stop-color="#d8cef8"/><stop offset="1" stop-color="#7a62d0"/></linearGradient><linearGradient id="ar" x1="0" y1="0" x2="1" y2="1"><stop offset="0" stop-color="#5ab0e0"/><stop offset="1" stop-color="#a8e4f4"/></linearGradient></defs>
<path d="M24 6L29 9L28 24L24 27Z" fill="#a896e4"/><path d="M2.5 6.5L11 4L13 6.5L25 3.5L25.5 25L3.5 31Z" fill="url(#fo)" stroke="#8068d0" stroke-width=".8"/>
<path d="M4 11L24 7M4 14L24 10M4 17L24 13M4 20L24 16M4 23L24 19M4 26L24 22" stroke="#9c88e0" stroke-width=".9" opacity=".7"/>
<path d="M14 14C21 13 25 17 25 22L30 21L23 31L17 23L21 23C21 19 18 17 14 17Z" fill="url(#ar)" stroke="#4aa0d0" stroke-width=".6"/></svg></div>
<div class="abs tb" style="left:182px;width:93px"><b style="left:40.5px;letter-spacing:-0.26px">Save Plot</b>
<svg class="abs" style="left:5px;top:2px" width="34" height="34" viewBox="0 0 34 34"><defs><linearGradient id="mt" x1="0" y1="0" x2="1" y2="0"><stop offset="0" stop-color="#888"/><stop offset=".5" stop-color="#fff"/><stop offset="1" stop-color="#777"/></linearGradient><linearGradient id="bk" x1="0" y1="0" x2="1" y2="0"><stop offset="0" stop-color="#555"/><stop offset=".3" stop-color="#222"/><stop offset="1" stop-color="#111"/></linearGradient></defs>
<path d="M2 3H30V31H6L2 27Z" fill="url(#bk)"/><rect x="6" y="3" width="20" height="16" fill="#f2f2f2"/><rect x="6" y="3" width="20" height="2.5" fill="#e81410"/>
<path d="M8 8H24M8 12H24M8 16H24" stroke="#bbb" stroke-width=".8"/><rect x="9" y="22" width="15" height="9" fill="url(#mt)"/><rect x="11.5" y="23.5" width="3.5" height="6" fill="#222"/></svg></div>
<div class="abs tb" style="left:275px;width:113px"><b style="left:40.5px;letter-spacing:-0.04px">Export Image</b>
<svg class="abs" style="left:4px;top:2px" width="34" height="34" viewBox="0 0 34 34"><defs><linearGradient id="sky" x1="0" y1="0" x2="0" y2="1"><stop offset="0" stop-color="#9cd0f0"/><stop offset="1" stop-color="#e8f4fa"/></linearGradient><linearGradient id="oa" x1="0" y1="0" x2="0" y2="1"><stop offset="0" stop-color="#f6b088"/><stop offset=".5" stop-color="#e07030"/><stop offset="1" stop-color="#b84808"/></linearGradient></defs>
<rect x="4.5" y="3.5" width="27" height="23" fill="#fafafa" stroke="#c8c8c8"/><rect x="7" y="6" width="22" height="18" fill="url(#sky)"/>
<path d="M12 17C16 14 19 15 22 14C25 12 27 12 29 12V17Z" fill="#2a9060"/><rect x="7" y="17" width="22" height="4" fill="#2080c8"/><rect x="7" y="21" width="22" height="3" fill="#e8c898"/><path d="M24 14L25 19H23Z" fill="#f4f0c0"/>
<path d="M2 21H10V16L19 24L10 32V27H2Z" fill="url(#oa)"/></svg></div>
<div class="abs tb" style="left:388px;width:102px"><b style="left:40.5px;letter-spacing:-0.26px">Export PDF</b>
<svg class="abs" style="left:4px;top:1px" width="34" height="36" viewBox="0 0 34 36"><path d="M11 2.5H23L31.5 11V32.5H11Z" fill="url(#pg)" stroke="#c4c4c4"/><path d="M23 2.5V11H31.5Z" fill="#f0f0f0" stroke="#c8c8c8" stroke-width=".8"/>
<rect x="6" y="5" width="18" height="8.5" rx="2" fill="#d81818"/><rect x="6" y="5" width="18" height="4" rx="2" fill="#f05048" opacity=".7"/>
<text x="15" y="12" font-family="Liberation Sans,sans-serif" font-size="7.5" font-weight="bold" fill="#fff" text-anchor="middle">PDF</text>
<path d="M23 16C24 22 20 28 17.5 30C19 26 26 23 30 25C27 26 23 23 23 16Z" fill="none" stroke="#e82030" stroke-width="1.8" stroke-linejoin="round"/>
<path d="M2 21H10V16L19 24L10 32V27H2Z" fill="url(#oa)"/></svg></div>
<div class="abs tb" style="left:490px;width:116px"><b style="left:40.5px;letter-spacing:-0.43px">Export DHTML</b>
<svg class="abs" style="left:4px;top:2px" width="34" height="34" viewBox="0 0 34 34"><defs><linearGradient id="dp" x1="0" y1="0" x2="0" y2="1"><stop offset="0" stop-color="#fff"/><stop offset="1" stop-color="#d4dce8"/></linearGradient></defs>
<rect x="8.5" y="3.5" width="22" height="25" fill="url(#dp)" stroke="#999"/><rect x="19" y="6" width="9" height="8" fill="#8cc0f0" stroke="#4a90e0" stroke-width=".8"/>
<path d="M11 7.5H17M11 12.5H17M16 18H28M16 23H28" stroke="#1060d8" stroke-width="1.8"/>
<path d="M2 21H10V16L19 24L10 32V27H2Z" fill="url(#oa)"/></svg></div>
<div class="abs tb" style="left:616px;width:73px"><b style="left:40.5px;letter-spacing:-0.63px">Undo</b>
<svg class="abs" style="left:5px;top:5px" width="32" height="32" viewBox="0 0 32 32"><defs><radialGradient id="ub" cx="16" cy="14.3" r="14" gradientUnits="userSpaceOnUse"><stop offset=".53" stop-color="#1a80f0"/><stop offset=".66" stop-color="#58b0fc"/><stop offset=".8" stop-color="#7cc6ff"/><stop offset=".92" stop-color="#3c9cf8"/><stop offset="1" stop-color="#1470ea"/></radialGradient></defs><path d="M23.0 26.4A14 14 0 1 0 6.8 24.9L3.3 28.9L14.7 28.9L14.7 16.8L11.5 20.3A7.5 7.5 0 1 1 19.8 20.8Z" fill="url(#ub)" stroke="#1a78ec" stroke-width=".7" stroke-linejoin="round"/></svg></div>
<div class="abs tb dis" style="left:689px;width:73px"><b style="left:40.5px;letter-spacing:-0.63px">Redo</b>
<svg class="abs" style="left:5px;top:5px" width="32" height="32" viewBox="0 0 32 32"><path d="M23.0 26.4A14 14 0 1 0 6.8 24.9L3.3 28.9L14.7 28.9L14.7 16.8L11.5 20.3A7.5 7.5 0 1 1 19.8 20.8Z" fill="#8f8f8f" transform="translate(32 0) scale(-1 1)"/></svg></div>
<div class="abs rad" style="left:774.3px;top:67.8px"></div><div class="abs rtx" style="left:793.5px;top:69px;letter-spacing:-0.60px">No Snap</div>
<div class="abs rad on" style="left:838.3px;top:67.8px"></div><div class="abs rtx" style="left:857.5px;top:69px;letter-spacing:-0.22px">Object Snap</div>
<div class="abs rad" style="left:921.3px;top:67.8px"></div><div class="abs rtx" style="left:940.5px;top:69px;letter-spacing:-0.53px">Grid Snap</div>
<div class="abs tb" style="left:999px;width:99px"><b style="left:40.5px;letter-spacing:-0.52px">Slide Show</b>
<svg class="abs" style="left:5.5px;top:0px" width="34" height="36" viewBox="0 0 34 36"><defs><linearGradient id="ss" x1="0" y1="0" x2="1" y2="1"><stop offset="0" stop-color="#f4f4ff"/><stop offset="1" stop-color="#c4c8f0"/></linearGradient></defs>
<path d="M12 26L8 34M16 26L22 33M14 26V31" stroke="#8070c8" stroke-width="1.6"/><path d="M4 6L24 9L23 28L5 23Z" fill="url(#ss)" stroke="#a8a4e0" stroke-width=".8"/>
<path d="M2 4L27 8V11L2 7Z" fill="#b0a8e8"/><path d="M7 12L18 14M8 16L13 17M8 20L13 21" stroke="#6058c8" stroke-width="1.4"/><path d="M15 17L21 18V24L15 23Z" fill="#a4a8ec" stroke="#7870d0" stroke-width=".6"/></svg></div>
<div class="abs tb" style="left:1108px;width:118px"><b style="left:40.5px;letter-spacing:-0.38px">Run Simulation</b>
<svg class="abs" style="left:5.3px;top:3px" width="32" height="32" viewBox="0 0 32 32"><defs><radialGradient id="rs" cx=".5" cy=".4" r=".6"><stop offset="0" stop-color="#fff"/><stop offset=".8" stop-color="#f6f2ea"/><stop offset="1" stop-color="#e8dcc8"/></radialGradient><linearGradient id="pl" x1="0" y1="0" x2="0" y2="1"><stop offset="0" stop-color="#58b848"/><stop offset="1" stop-color="#186818"/></linearGradient></defs>
<circle cx="15.5" cy="15.5" r="14" fill="url(#rs)" stroke="#d2bc8c" stroke-width="1.3"/><path d="M10 9L23 15.5L10 22Z" fill="url(#pl)"/></svg></div>

<!-- tab row -->
<div class="abs" id="tabrow"></div>
<div class="abs" id="tab"><span style="letter-spacing:0.01px">*Untitled-1</span></div>
<svg class="abs" style="left:1155px;top:124px" width="124" height="25" viewBox="0 0 124 25"><defs><linearGradient id="idk" x1="0" y1="0" x2="0" y2="1"><stop offset="0" stop-color="#fbf7f2"/><stop offset=".5" stop-color="#eadccb"/><stop offset="1" stop-color="#d9c1a4"/></linearGradient></defs>
<path d="M4 1H122.5V23.5H28Z" fill="url(#idk)" stroke="#a8844c" stroke-width="1"/><path d="M33 10H42L37.5 15Z" fill="#555"/>
<text x="52" y="15.5" font-family="Liberation Sans,sans-serif" font-size="11" fill="#000" letter-spacing="-.3">Image Dock</text></svg>

<!-- left panel -->
<div class="abs" id="leftpanel"></div>
<div class="abs" id="lphead"><span class="abs" style="left:12px;top:7px;font-size:13px;letter-spacing:.2px;white-space:nowrap">All Elements</span></div>
<div class="abs" style="left:5.3px;top:135px;letter-spacing:-0.02px">Filter:</div>
<div class="abs" style="left:40px;top:132px;width:86px;height:19px;background:#fff;border:1px solid #f0c898;box-shadow:inset 1px 1px 0 #fbe6cc"></div>
<div class="abs sbtn" style="left:130px;top:132px;width:18px;height:20px"><svg class="abs" style="left:2px;top:3px" width="12" height="12" viewBox="0 0 12 12"><path d="M1 6L6 1.5V4H10.5V8H6V10.5Z" fill="#d88838" stroke="#8a4a10" stroke-width="1"/></svg></div>

<div class="abs card" style="top:160px;height:80px"><i style="letter-spacing:-0.59px">Bla Bla Bla</i><div class="abs" style="left:28px;top:24px;width:60px;height:8px;background:#bebebe;box-shadow:0 12px 0 #bebebe,0 24px 0 #bebebe,0 36px 0 #bebebe"></div></div>
<div class="abs card" style="top:255px;height:60px"><i style="letter-spacing:-0.57px">Ellipse</i><div class="abs" style="left:45px;top:24px;width:26px;height:26px;border:1.5px solid #444;border-radius:50%"></div></div>
<div class="abs card" style="top:330px;height:67px"><i style="letter-spacing:-0.19px">Image</i>
<svg class="abs" style="left:42px;top:24px" width="32" height="32" viewBox="0 0 32 32"><defs><linearGradient id="isk" x1="0" y1="0" x2="0" y2="1"><stop offset="0" stop-color="#7ab4ee"/><stop offset=".75" stop-color="#cfe6fa"/><stop offset="1" stop-color="#e8f4fc"/></linearGradient><linearGradient id="igr" x1="0" y1="0" x2="0" y2="1"><stop offset="0" stop-color="#a4dc60"/><stop offset="1" stop-color="#78c030"/></linearGradient></defs>
<rect width="32" height="32" fill="url(#isk)"/><path d="M0 26C6 23 12 24 18 27C22 24 28 24 32 25V32H0Z" fill="url(#igr)"/>
<path d="M13 14C11 11 14 9 16 10C17 6 23 6 24 10C28 9 30 13 28 15C24 16 16 16 13 14Z" fill="#fff"/><path d="M2 4L5 2L4 4L7 3M4 8L8 5L8 7L12 4" stroke="#fff" stroke-width="1" fill="none"/></svg></div>
<div class="abs card" style="top:412px;height:55px"><i style="letter-spacing:-0.53px">Line</i><div class="abs" style="left:33px;top:34px;width:52px;height:1px;background:#111"></div></div>
<div class="abs card" style="top:482px;height:55px"><i style="letter-spacing:-0.22px">Rectangle</i><div class="abs" style="left:48px;top:24px;width:21px;height:21px;border:1px solid #333"></div></div>
<div class="abs card" style="top:552px;height:51px"><i style="letter-spacing:0.30px">Text</i><span class="abs" style="left:33px;top:24px;font-size:11px;white-space:nowrap;letter-spacing:-0.05px">Text Label</span></div>
<div class="abs card" style="top:618px;height:55px"><i style="letter-spacing:-0.31px">Triangle</i><svg class="abs" style="left:47px;top:23px" width="24" height="24" viewBox="0 0 24 24"><path d="M1.5 1.5V21.5H21.5Z" fill="none" stroke="#333" stroke-width="1"/></svg></div>
<div class="abs card" style="top:688px;height:59px"><i style="letter-spacing:-0.00px">Button</i><div class="abs" style="left:27px;top:24px;width:62px;height:25px;border:1.5px solid #333;background:#e6e6e6;text-align:center;line-height:22px;font-size:11px">Button</div></div>
<div class="abs card" style="top:762px;height:59px"><i style="letter-spacing:-0.46px">CheckBox</i><div class="abs" style="left:16px;top:28px;width:16px;height:16px;border:1px solid #333"></div><svg class="abs" style="left:16px;top:28px" width="16" height="16" viewBox="0 0 16 16"><path d="M2.5 8.5L6 13L13.5 2" fill="none" stroke="#222" stroke-width="1"/></svg><span class="abs" style="left:34.5px;top:30px;white-space:nowrap;letter-spacing:-0.21px">CheckBox</span></div>
<div class="abs card" style="top:836px;height:40px"><i style="letter-spacing:-0.56px">ComboBox</i><div class="abs" style="left:12px;top:24px;width:92px;height:20px;border:1.5px solid #333;background:#e6e6e6"><div class="abs" style="left:69px;top:0;width:1px;height:20px;background:#333"></div><span class="abs" style="left:8px;top:7px;white-space:nowrap">ComboBox</span></div></div>

<div class="abs" id="sbar"></div>
<div class="abs" style="left:131px;top:160px;width:17px;height:15px;background:linear-gradient(#f8f2e8,#efe6d8);border-right:1px solid #c8b498"></div>
<svg class="abs" style="left:134px;top:163px" width="11" height="8" viewBox="0 0 11 8"><path d="M0.5 6.5L5.5 1.5L10.5 6.5Z" fill="#555"/></svg>
<div class="abs" id="sthumb"></div>
<div class="abs" style="left:133px;top:246px;width:1px;height:1px;box-shadow:0px 0px 0 #fffdf6,1px 0px 0 #f0e6d4,0px 1px 0 #f0e6d4,1px 1px 0 #a8946e,4px 0px 0 #fffdf6,5px 0px 0 #f0e6d4,4px 1px 0 #f0e6d4,5px 1px 0 #a8946e,8px 0px 0 #fffdf6,9px 0px 0 #f0e6d4,8px 1px 0 #f0e6d4,9px 1px 0 #a8946e,0px 4px 0 #fffdf6,1px 4px 0 #f0e6d4,0px 5px 0 #f0e6d4,1px 5px 0 #a8946e,4px 4px 0 #fffdf6,5px 4px 0 #f0e6d4,4px 5px 0 #f0e6d4,5px 5px 0 #a8946e,8px 4px 0 #fffdf6,9px 4px 0 #f0e6d4,8px 5px 0 #f0e6d4,9px 5px 0 #a8946e,0px 8px 0 #fffdf6,1px 8px 0 #f0e6d4,0px 9px 0 #f0e6d4,1px 9px 0 #a8946e,4px 8px 0 #fffdf6,5px 8px 0 #f0e6d4,4px 9px 0 #f0e6d4,5px 9px 0 #a8946e,8px 8px 0 #fffdf6,9px 8px 0 #f0e6d4,8px 9px 0 #f0e6d4,9px 9px 0 #a8946e"></div>
<div class="abs" style="left:131px;top:855px;width:17px;height:15px;background:linear-gradient(#f8f2e8,#efe6d8);border-right:1px solid #c8b498"></div>
<svg class="abs" style="left:134px;top:859px" width="11" height="8" viewBox="0 0 11 8"><path d="M0.5 1.5L5.5 6.5L10.5 1.5Z" fill="#555"/></svg>

<div class="abs acc" style="top:870px">Basic</div>
<div class="abs acc" style="top:900px">Widgets</div>
<div class="abs acc" style="top:930px">Annotation</div>
<div class="abs acc" style="top:960px">Customization</div>

<!-- status bar -->
<div class="abs" id="statusbar"></div>
<div class="abs" style="left:1278px;top:125px;width:2px;height:865px;background:linear-gradient(90deg,#fdf0dc,#efc690)"></div>
<div class="abs sbtn" style="left:159px;top:961px;width:84px;height:24px"><svg class="abs" style="left:5px;top:3px" width="16" height="17" viewBox="0 0 16 17"><path d="M2.500000 1.500000H10L14.500000 6V15.500000H2.500000Z" fill="#fdf6e4" stroke="#d2a858"/><path d="M10 1.500000V6H14.500000" fill="#f8e8c4" stroke="#d2a858" stroke-width=".8"/><path d="M1 4.500000H4M1 8.500000H4M1 12.500000H4" stroke="#a87830" stroke-width="1"/></svg><span class="abs" style="left:24.2px;top:5px;white-space:nowrap;letter-spacing:-0.14px">Pages: 1/1</span></div>
<div class="abs" style="left:542.3px;top:968px;white-space:nowrap;letter-spacing:-0.24px">UI Theme:</div>
<div class="abs combo" style="left:601px;top:962px;width:89px;height:24px"><span class="abs" style="left:3px;top:4px;white-space:nowrap;letter-spacing:-0.35px">Wire Frame</span><svg class="abs" style="left:69px;top:8px" width="11" height="7" viewBox="0 0 11 7"><path d="M0.500000 0.500000H10.500000L5.500000 6Z" fill="#666"/><path d="M0.500000 0.500000H10.500000L9.500000 1.500000H1.500000Z" fill="#444"/></svg></div>
<div class="abs" style="left:710.5px;top:968px;white-space:nowrap;letter-spacing:-0.36px">Plot Size:</div>
<div class="abs inp" style="left:762px;top:963px;width:30px;height:22px">1024</div>
<svg class="abs" style="left:794px;top:965px" width="10" height="18" viewBox="0 0 10 18"><path d="M0.3 5.6L5 0.5L9.7 5.6Z" fill="url(#spu)"/><path d="M0.3 12.4L5 17.5L9.7 12.4Z" fill="url(#spd)"/></svg>
<div class="abs" style="left:813px;top:968px">X</div>
<div class="abs inp" style="left:827px;top:963px;width:30px;height:22px">768</div>
<svg class="abs" style="left:860px;top:965px" width="10" height="18" viewBox="0 0 10 18"><path d="M0.3 5.6L5 0.5L9.7 5.6Z" fill="url(#spu)"/><path d="M0.3 12.4L5 17.5L9.7 12.4Z" fill="url(#spd)"/></svg>
<div class="abs" style="left:892.5px;top:968px;white-space:nowrap;letter-spacing:-0.24px">Background:</div>
<div class="abs sbtn" style="left:960px;top:962px;width:24px;height:24px"><div class="abs" style="left:3px;top:3px;width:16px;height:16px;background:#fff;border-right:1px solid #888;border-bottom:1px solid #888"></div><svg class="abs" style="left:14px;top:15px" width="6" height="4" viewBox="0 0 6 4"><path d="M0 0H6L3 3.5Z" fill="#666"/></svg></div>
<div class="abs" style="left:1004px;top:966px;width:16px;height:16px;border:2px solid #c8962c;border-right-color:#f3dca0;border-bottom-color:#f3dca0;background:radial-gradient(circle at 50% 50%,#8a6008,#6a4600)"></div>
<div class="abs" style="left:1023.8px;top:968px;white-space:nowrap;letter-spacing:-0.72px">Rumple</div>
<div class="abs" style="left:1065px;top:966px;width:100px;height:16px;border-radius:8px;background:linear-gradient(#a8a8a8 0,#c8c8c8 3px,#d0d0d0 6px,#d2d2d2 100%)"></div>
<div class="abs" style="left:1066px;top:967px;width:14px;height:14px;border-radius:50%;background:radial-gradient(circle at 50% 50%,#c4c4c4 0,#bdbdbd 25%,#8c8c8c 40%,#9c9c9c 60%,#b4b4b4 100%)"></div>
<div class="abs sbtn dis" style="left:1183px;top:963px;width:39px;height:22px"><span class="abs" style="left:4.8px;top:4px;letter-spacing:-0.26px">Apply</span></div>
<div class="abs sbtn dis" style="left:1226px;top:963px;width:45px;height:22px"><span class="abs" style="left:4.5px;top:4px;letter-spacing:-0.39px">Reload</span></div>
<div class="abs" id="bottomblue"></div>
</body>
</html>
